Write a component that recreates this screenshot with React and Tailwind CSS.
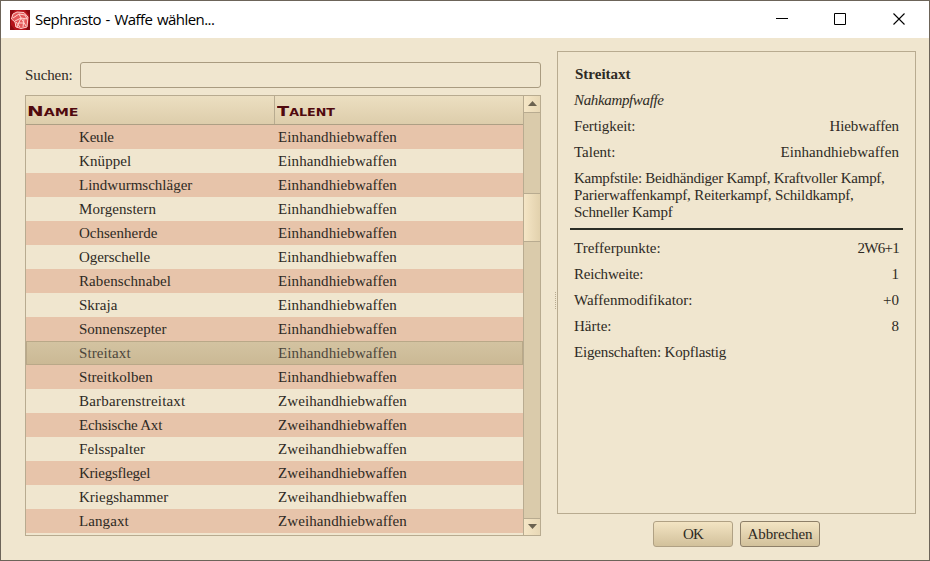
import React from "react";

const ROWS = [
  ["Keule", "Einhandhiebwaffen", "tracking-[-0.2px]"],
  ["Knüppel", "Einhandhiebwaffen", "tracking-[0.1px]"],
  ["Lindwurmschläger", "Einhandhiebwaffen", "tracking-normal"],
  ["Morgenstern", "Einhandhiebwaffen", "tracking-[0.05px]"],
  ["Ochsenherde", "Einhandhiebwaffen", "tracking-normal"],
  ["Ogerschelle", "Einhandhiebwaffen", "tracking-[-0.05px]"],
  ["Rabenschnabel", "Einhandhiebwaffen", "tracking-[0.1px]"],
  ["Skraja", "Einhandhiebwaffen", "tracking-normal"],
  ["Sonnenszepter", "Einhandhiebwaffen", "tracking-normal"],
  ["Streitaxt", "Einhandhiebwaffen", "tracking-[0.1px]"],
  ["Streitkolben", "Einhandhiebwaffen", "tracking-[0.04px]"],
  ["Barbarenstreitaxt", "Zweihandhiebwaffen", "tracking-[0.18px]"],
  ["Echsische Axt", "Zweihandhiebwaffen", "tracking-[-0.17px]"],
  ["Felsspalter", "Zweihandhiebwaffen", "tracking-[0.1px]"],
  ["Kriegsflegel", "Zweihandhiebwaffen", "tracking-[-0.25px]"],
  ["Kriegshammer", "Zweihandhiebwaffen", "tracking-normal"],
  ["Langaxt", "Zweihandhiebwaffen", "tracking-[0.1px]"],
];
const SELECTED = 9;

function rowClass(i) {
  if (i === SELECTED)
    return "border-[#b9a888] bg-linear-to-b from-[#d3c3a1] to-[#cbb995] text-[#4d473c]";
  return i % 2 === 0 ? "border-[#e7c4aa] bg-[#e7c4aa]" : "border-[#f0e6cf] bg-[#f0e6cf]";
}

function TitleBar() {
  return (
    <header className="flex h-[37px] shrink-0 items-center bg-white pl-[9px] font-['Open_Sans','Noto_Sans',sans-serif] text-[15px] text-black">
      <svg width="20" height="20" viewBox="0 0 20 20" className="shrink-0">
        <rect width="20" height="20" fill="#b5141b" />
        <path d="M0 0h5L1 6v9l4 5H0zM15 0h5v20h-4l3-8V5z" fill="#8a0c12" />
        <path d="M7 2 14 2.500 18 7 17 17 11 18.500 5 17 5 12 1.500 9 3 4z" fill="#e4595a" />
        <path
          d="M7 2 14 2.500 18 7 17 17 11 18.500 6 17 5 12 1.500 9 3 4zM3 8l6-4 2 4-6 3M9 4l6 1 2 4-6-1M11 8l-4 9M11 8l5 8M8 13h6M6 12l4 5M14 9l-1 8"
          fill="none"
          stroke="#ffd3ce"
          strokeWidth="1"
        />
      </svg>
      <h1 className="ml-[5px] flex-1 pb-px whitespace-nowrap tracking-[-0.55px] [word-spacing:1.2px]">Sephrasto - Waffe wählen...</h1>
      <svg width="160" height="37" viewBox="0 0 160 37" fill="none" stroke="#000" strokeWidth="1" className="shrink-0">
        <path d="M7 17.5h12" />
        <path d="M65.500 12.500h11v11h-11z" />
        <path d="m124.500 12.500 11 11m0-11-11 11" strokeWidth="1.1" />
      </svg>
    </header>
  );
}

function ScrollBar() {
  return (
    <div className="flex w-[17px] shrink-0 flex-col border-l border-[#b8ab90] bg-[#dacbab]">
      <div className="flex h-[17px] items-center justify-center border-b border-[#b8ab90] bg-linear-to-r from-[#f5e6c6] to-[#e8d8b6] pb-[2px]">
        <svg width="9" height="5"><path d="M0 5 4.500 0 9 5z" fill="#6b6250" /></svg>
      </div>
      <div className="mt-[80px] h-[49px] border-y border-[#b8ab90] bg-linear-to-r from-[#f5e6c6] to-[#e2d1ad]" />
      <div className="mt-auto flex h-[17px] items-center justify-center border-t border-[#b8ab90] bg-linear-to-r from-[#f5e6c6] to-[#e8d8b6] pb-[2px]">
        <svg width="9" height="5"><path d="M0 0h9L4.500 5z" fill="#6b6250" /></svg>
      </div>
    </div>
  );
}

function WeaponTable() {
  return (
    <div className="mt-[7px] flex h-[441px] border border-[#b8ab90]">
      <div className="flex min-w-0 flex-1 flex-col">
        <div className="flex h-[29px] shrink-0 border-b border-[#ad9f84] bg-linear-to-b from-[#ecdfc1] to-[#ddcdab] font-['DejaVu_Sans',sans-serif] text-[14px] leading-[31px] font-bold text-[#50090e] [font-variant:small-caps]">
          <div className="w-[249px] border-r border-[#b8ab90] pl-px">
            <span className="inline-block origin-left scale-x-[1.42]">Name</span>
          </div>
          <div className="pl-[2px]">
            <span className="inline-block origin-left scale-x-[1.27]">Talent</span>
          </div>
        </div>
        {ROWS.map(([name, talent, tracking], i) => (
          <div key={name} className={`flex h-6 shrink-0 items-center border ${rowClass(i)}`}>
            <span className={`w-[251px] shrink-0 pl-[52px] whitespace-nowrap ${tracking}`}>{name}</span>
            <span className="tracking-[0.1px] whitespace-nowrap">{talent}</span>
          </div>
        ))}
      </div>
      <ScrollBar />
    </div>
  );
}

function Line({ label, value, labelClass = "", valueClass = "" }) {
  return (
    <div className="flex h-[26px] items-center justify-between px-1 pb-[2px]">
      <span className={labelClass}>{label}</span>
      <span className={valueClass}>{value}</span>
    </div>
  );
}

function Details() {
  return (
    <section className="h-[463px] border border-[#b8ab90] px-[12px] pt-[10px]">
      <h2 className="flex h-[26px] items-center pb-[2px] pl-[5px] font-bold">Streitaxt</h2>
      <p className="flex h-[26px] items-center pb-[2px] pl-1 tracking-[-0.35px] italic">Nahkampfwaffe</p>
      <Line label="Fertigkeit:" value="Hiebwaffen" labelClass="tracking-[-0.1px]" valueClass="tracking-[-0.1px]" />
      <Line label="Talent:" value="Einhandhiebwaffen" valueClass="tracking-[0.08px]" />
      <p className="mt-1 pl-1 leading-[17px] whitespace-nowrap">
        <span className="block tracking-[-0.27px]">Kampfstile: Beidhändiger Kampf, Kraftvoller Kampf,</span>
        <span className="block tracking-[-0.14px]">Parierwaffenkampf, Reiterkampf, Schildkampf,</span>
        <span className="block tracking-[-0.24px]">Schneller Kampf</span>
      </p>
      <hr className="mt-[7px] mb-[6px] h-[2px] border-0 bg-[#2b2d25]" />
      <Line label="Trefferpunkte:" value="2W6+1" valueClass="tracking-[-0.7px]" />
      <Line label="Reichweite:" value="1" labelClass="tracking-[-0.22px]" />
      <Line label="Waffenmodifikator:" value="+0" />
      <Line label="Härte:" value="8" />
      <Line label="Eigenschaften: Kopflastig" labelClass="tracking-[-0.16px]" />
    </section>
  );
}

export default function App() {
  return (
    <div className="flex h-[561px] w-[930px] flex-col overflow-hidden border border-[#6c6459] bg-[#f0e6cf] font-['Liberation_Serif',serif] text-[15px] leading-[18px] text-[#2e2a24]">
      <TitleBar />
      <main className="flex min-h-0 flex-1">
        <div className="ml-6 w-[516px] pt-6">
          <div className="flex items-center">
            <label htmlFor="search" className="w-[55px] tracking-[-0.1px]">Suchen:</label>
            <input id="search" className="h-[26px] w-[461px] rounded-[3px] border border-[#a99b80] bg-[#f0e6cf] px-2" />
          </div>
          <WeaponTable />
        </div>
        <div className="flex w-4 items-start justify-end pt-[254px]">
          <div className="h-[17px] w-[2px] border-l border-dotted border-[#b8ab90]" />
        </div>
        <div className="w-[359px] pt-[13px]">
          <Details />
          <div className="mt-[7px] ml-[96px] flex gap-[7px]">
            <button className="h-[26px] w-20 rounded-[3px] border border-[#b0a184] bg-linear-to-b from-[#f3e4c3] to-[#d2c19b] tracking-[-0.8px]">OK</button>
            <button className="h-[26px] w-20 rounded-[3px] border border-[#8d7f68] bg-linear-to-b from-[#f3e4c3] to-[#d2c19b] tracking-[-0.1px] whitespace-nowrap">Abbrechen</button>
          </div>
        </div>
      </main>
    </div>
  );
}
